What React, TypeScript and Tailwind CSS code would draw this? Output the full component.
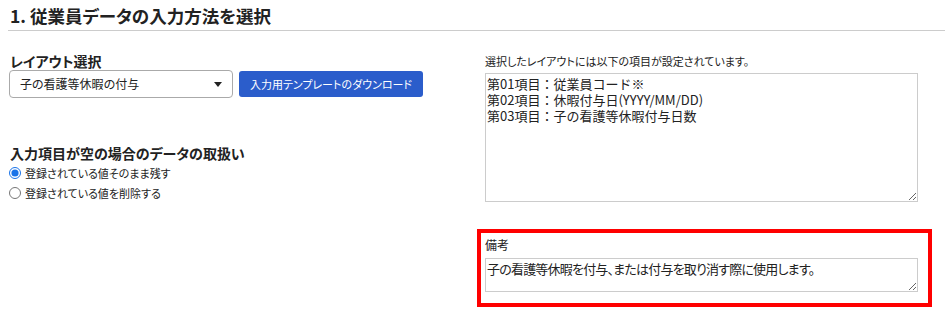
import { useState } from "react";

const fieldText =
  "第01項目：従業員コード※\n第02項目：休暇付与日(YYYY/MM/DD)\n第03項目：子の看護等休暇付与日数";

export default function App() {
  const [mode, setMode] = useState("keep");

  return (
    <div className="w-[945px] h-[324px] overflow-hidden bg-white text-[#222] font-['Noto_Sans_CJK_JP',sans-serif] [font-feature-settings:'palt']">
      <h2 className="ml-2 pl-[2px] pt-[5px] pb-[4px] text-[17.5px] leading-[21px] font-bold border-b border-[#ccc]">
        1. 従業員データの入力方法を選択
      </h2>

      <div className="flex">
        {/* left column */}
        <div className="w-[468px] pl-[9px] shrink-0">
          <p className="mt-[21px] pl-px text-[14px] leading-[18px] font-bold">
            レイアウト選択
          </p>
          <div className="flex items-center gap-[6px]">
            <div className="w-[224px] h-[28px] flex items-center justify-between pl-[10px] pr-[10px] border border-[#aaa] rounded-[4px] text-[12px]">
              <span>子の看護等休暇の付与</span>
              <span className="w-0 h-0 border-l-[4px] border-r-[4px] border-t-[5px] border-l-transparent border-r-transparent border-t-[#222]" />
            </div>
            <button className="w-[184px] h-[26px] rounded-[3px] bg-[#2b5dcb] text-white text-[11px] leading-[26px]">
              入力用テンプレートのダウンロード
            </button>
          </div>

          <p className="mt-[46px] pl-px text-[14px] leading-[18px] font-bold">
            入力項目が空の場合のデータの取扱い
          </p>
          <div className="mt-px">
            {[
              { id: "keep", label: "登録されている値そのまま残す" },
              { id: "delete", label: "登録されている値を削除する" },
            ].map((item) => (
              <label
                key={item.id}
                className="flex items-center h-[20px] text-[11px] cursor-pointer"
              >
                <input
                  type="radio"
                  name="empty"
                  checked={mode === item.id}
                  onChange={() => setMode(item.id)}
                  className="w-[12px] h-[12px] m-0 mr-[4px] accent-[#1a73e8]"
                />
                {item.label}
              </label>
            ))}
          </div>
        </div>

        {/* right column */}
        <div className="w-[455px] ml-auto mr-[13px]">
          <p className="mt-[22px] pl-2 text-[11px] leading-[16px]">
            選択したレイアウトには以下の項目が設定されています。
          </p>
          <div className="pl-2 mt-[4px]">
            <textarea
              readOnly
              defaultValue={fieldText}
              className="block w-[433px] h-[129px] border border-[#ccc] px-px pt-[2px] text-[13px] leading-[16px] text-[#222] outline-none [font-feature-settings:normal]"
            />
          </div>

          <div className="mt-[27px] h-[78px] border-4 border-[#ff0000] pl-1 pt-1">
            <p className="text-[12px] leading-[16px]">備考</p>
            <textarea
              readOnly
              defaultValue="子の看護等休暇を付与、または付与を取り消す際に使用します。"
              className="block mt-[5px] w-[433px] h-[34px] border border-[#ccc] px-px pt-[2px] text-[13px] leading-[16px] tracking-[-0.8px] text-[#222] outline-none"
            />
          </div>
        </div>
      </div>
    </div>
  );
}
